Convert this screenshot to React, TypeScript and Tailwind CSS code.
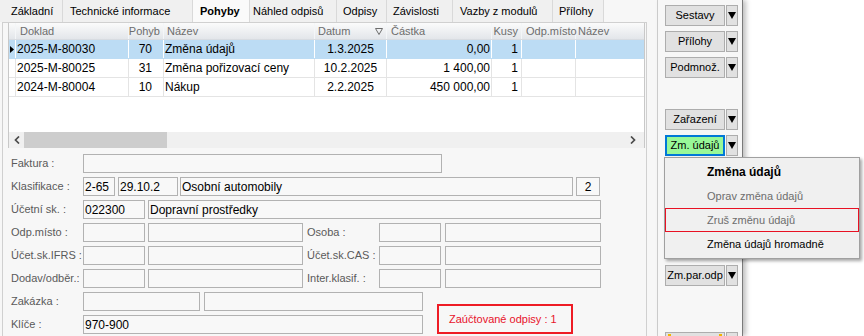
import React from "react";

const tabs = [
  { label: "Základní", w: "w-[63px]", pl: "pl-[11px]" },
  { label: "Technické informace", w: "w-[130px]", pl: "pl-[7px]" },
  { label: "Pohyby", w: "w-[57px]", pl: "pl-[7px]", active: true },
  { label: "Náhled odpisů", w: "w-[87px]", pl: "pl-[3px]" },
  { label: "Odpisy", w: "w-[50px]", pl: "pl-[6px]" },
  { label: "Závislosti", w: "w-[66px]", pl: "pl-[6px]" },
  { label: "Vazby z modulů", w: "w-[100px]", pl: "pl-[7px]" },
  { label: "Přílohy", w: "w-[51px]", pl: "pl-[6px]" },
];

const rows = [
  { doklad: "2025-M-80030", pohyb: "70", nazev: "Změna údajů", datum: "1.3.2025", castka: "0,00", kusy: "1", selected: true },
  { doklad: "2025-M-80025", pohyb: "31", nazev: "Změna pořizovací ceny", datum: "10.2.2025", castka: "1 400,00", kusy: "1" },
  { doklad: "2024-M-80004", pohyb: "10", nazev: "Nákup", datum: "2.2.2025", castka: "450 000,00", kusy: "1" },
];

function Tabs() {
  return (
    <div className="flex h-[22px] text-[11px]">
      {tabs.map((t) =>
        t.active ? (
          <div key={t.label} className={`${t.w} ${t.pl} flex items-center border-r border-[#d9d9d9] bg-[#fafafa] font-bold`}>
            {t.label}
          </div>
        ) : (
          <div key={t.label} className={`${t.w} ${t.pl} flex items-center border-r border-[#d9d9d9] bg-[#f0f0f0]`}>
            {t.label}
          </div>
        )
      )}
    </div>
  );
}

function Chevron({ right }: { right?: boolean }) {
  return (
    <svg width="6" height="8" viewBox="0 0 6 8">
      <path d={right ? "M1 0.5L4.5 4L1 7.5" : "M5 0.5L1.5 4L5 7.5"} stroke="#4a4a4a" strokeWidth="1.7" fill="none" />
    </svg>
  );
}

function Grid() {
  const head = "flex items-center border-r border-[#f4f6f8]";
  return (
    <div className="flex h-[125px] w-[637px] flex-col border-l border-r border-[#c8c8c8]">
      <div className="flex h-[17px] border-b border-[#d8dce1] bg-gradient-to-b from-[#fbfbfb] to-[#e3e6ea] text-[11px] text-[#6d6d6d]">
        <div className={`${head} w-[7px]`} />
        <div className={`${head} w-[113px] pl-[4px]`}>Doklad</div>
        <div className={`${head} w-[35px] justify-end pr-[3px]`}>Pohyb</div>
        <div className={`${head} w-[151px] pl-[3px]`}>Název</div>
        <div className={`${head} w-[72px] justify-between pl-[3px] pr-[3px]`}>
          <span>Datum</span>
          <svg width="8" height="7" viewBox="0 0 8 7">
            <path d="M0.5 0.5H7.5L4 6.5Z" stroke="#6d6d6d" fill="none" />
          </svg>
        </div>
        <div className={`${head} w-[105px] pl-[4px]`}>Částka</div>
        <div className={`${head} w-[30px] justify-end pr-[3px]`}>Kusy</div>
        <div className={`${head} w-[54px] pl-[4px]`}>Odp.místo</div>
        <div className="flex flex-1 items-center pl-[2px]">Název</div>
      </div>
      {rows.map((r) => {
        const line = r.selected ? "border-white" : "border-[#e4e4e4]";
        const cell = `flex items-center border-r ${line}`;
        return (
          <div
            key={r.doklad}
            className={`flex h-[19px] border-b text-[12px] ${r.selected ? "border-[#bcdcf4] bg-[#bcdcf4]" : "border-[#e4e4e4] bg-white"}`}
          >
            <div className={`${cell} w-[7px] justify-center`}>
              {r.selected && (
                <svg width="4" height="7" viewBox="0 0 4 7">
                  <path d="M0 0L4 3.5L0 7Z" fill="#000" />
                </svg>
              )}
            </div>
            <div className={`${cell} w-[113px] pl-[1px]`}>{r.doklad}</div>
            <div className={`${cell} w-[35px] justify-end pr-[11px]`}>{r.pohyb}</div>
            <div className={`${cell} w-[151px] pl-[1px]`}>{r.nazev}</div>
            <div className={`${cell} w-[72px] justify-center`}>{r.datum}</div>
            <div className={`${cell} w-[105px] justify-end pr-[1px]`}>{r.castka}</div>
            <div className={`${cell} w-[30px] justify-end pr-[3px]`}>{r.kusy}</div>
            <div className={`${cell} w-[54px]`} />
            <div className="flex-1" />
          </div>
        );
      })}
      <div className="flex-1 bg-white" />
      <div className="flex h-[16px] items-center bg-[#f0f0f0]">
        <div className="flex w-[15px] justify-center pl-[1px]">
          <Chevron />
        </div>
        <div className="h-full w-[143px] bg-[#cdcdcd]" />
        <div className="flex-1" />
        <div className="flex w-[14px] justify-start">
          <Chevron right />
        </div>
      </div>
    </div>
  );
}

function Box({ w, text, center, ml }: { w: string; text?: string; center?: boolean; ml?: string }) {
  return (
    <div
      className={`${w} ${ml ?? ""} flex h-full items-center border border-[#b2b2b2] bg-[#f8f8f8] text-[12px] ${center ? "justify-center" : "pl-[1px]"}`}
    >
      {text}
    </div>
  );
}

function Label({ text, w = "w-[72px]", ml }: { text: string; w?: string; ml?: string }) {
  return <div className={`${w} ${ml ?? ""} shrink-0 text-[11px] text-[#5a5a5a]`}>{text}</div>;
}

function Form() {
  return (
    <div className="flex flex-col gap-[4px] pl-[3px] pt-[6px]">
      <div className="flex h-[19px] items-center">
        <Label text="Faktura :" />
        <Box w="w-[359px]" />
      </div>
      <div className="flex h-[19px] items-center">
        <Label text="Klasifikace :" />
        <Box w="w-[32px]" text="2-65" />
        <Box w="w-[60px]" ml="ml-[3px]" text="29.10.2" />
        <Box w="w-[393px]" ml="ml-[2px]" text="Osobní automobily" />
        <Box w="w-[24px]" ml="ml-[3px]" text="2" center />
      </div>
      <div className="flex h-[19px] items-center">
        <Label text="Účetní sk. :" />
        <Box w="w-[62px]" text="022300" />
        <Box w="w-[453px]" ml="ml-[3px]" text="Dopravní prostředky" />
      </div>
      {[
        ["Odp.místo :", "Osoba :"],
        ["Účet.sk.IFRS :", "Účet.sk.CAS :"],
        ["Dodav/odběr.:", "Inter.klasif. :"],
      ].map(([a, b]) => (
        <div key={a} className="flex h-[19px] items-center">
          <Label text={a} />
          <Box w="w-[62px]" />
          <Box w="w-[155px]" ml="ml-[3px]" />
          <Label text={b} ml="ml-[4px]" />
          <Box w="w-[62px]" />
          <Box w="w-[156px]" ml="ml-[4px]" />
        </div>
      ))}
      <div className="flex items-end">
        <div className="flex flex-col gap-[4px]">
          <div className="flex h-[19px] items-center">
            <Label text="Zakázka :" />
            <Box w="w-[117px]" />
            <Box w="w-[219px]" ml="ml-[4px]" />
          </div>
          <div className="flex h-[19px] items-center">
            <Label text="Klíče :" />
            <Box w="w-[340px]" text="970-900" />
          </div>
        </div>
        <div className="ml-[14px] flex h-[30px] w-[136px] items-center border-2 border-[#ee1c25] pl-[10px] text-[11px] text-[#e8132b]">
          Zaúčtované odpisy : 1
        </div>
      </div>
    </div>
  );
}

function Arrow() {
  return (
    <svg width="8" height="7" viewBox="0 0 8 7">
      <path d="M0 0H8L4 7Z" fill="#000" />
    </svg>
  );
}

function PanelButton({ label, mt, green, marks }: { label: string; mt: string; green?: boolean; marks?: boolean }) {
  return (
    <div className={`${mt} flex h-[21px] shrink-0 gap-[1px] text-[11px]`}>
      <div
        className={`relative flex w-[60px] items-center justify-center ${
          green ? "border-2 border-[#0078d7] bg-[#98f898]" : "border border-[#adadad] bg-[#e1e1e1]"
        }`}
      >
        {label}
        {marks && (
          <>
            <span className="absolute left-[2px] top-[1px] h-[3px] w-[3px] bg-[#f2b600]" />
            <span className="absolute right-[2px] top-[1px] h-[3px] w-[3px] bg-[#f2b600]" />
          </>
        )}
      </div>
      <div className="flex w-[12px] items-center justify-center border border-[#adadad] bg-[#e1e1e1]">
        <Arrow />
      </div>
    </div>
  );
}

function Panel() {
  return (
    <div className="flex w-[85px] shrink-0 flex-col border-r border-[#7a7a7a] bg-[#f7f7f7] pl-[7px] pt-[5px] shadow-[3px_0_5px_rgba(0,0,0,0.25)]">
      <PanelButton label="Sestavy" mt="mt-0" />
      <PanelButton label="Přílohy" mt="mt-[5px]" />
      <PanelButton label="Podmnož." mt="mt-[5px]" />
      <PanelButton label="Zařazení" mt="mt-[31px]" />
      <PanelButton label="Zm. údajů" mt="mt-[5px]" green />
      <PanelButton label="Zm.par.odp" mt="mt-[109px]" />
      <PanelButton label="" mt="mt-[46px]" marks />
    </div>
  );
}

function Menu() {
  return (
    <div className="absolute left-[664px] top-[157px] flex h-[102px] w-[196px] flex-col border border-[#a0a0a0] bg-[#f0f0f0] py-[2px] shadow-[2px_2px_3px_rgba(0,0,0,0.35)]">
      <div className="flex h-[24px] items-center pl-[42px] text-[12px] font-bold">Změna údajů</div>
      <div className="flex h-[24px] items-center pl-[42px] text-[11px] text-[#6d6d6d]">Oprav změna údajů</div>
      <div className="flex h-[24px] items-center border border-[#e81123] pl-[41px] text-[11px] text-[#6d6d6d]">
        Zruš změnu údajů
      </div>
      <div className="flex h-[24px] items-center pl-[42px] text-[11px]">Změna údajů hromadně</div>
    </div>
  );
}

export default function App() {
  return (
    <div className="relative flex h-[336px] w-[864px] overflow-hidden bg-white font-['Liberation_Sans',Arial,sans-serif] text-black">
      <div className="flex w-[658px] shrink-0 flex-col border-r border-[#d0d0d0] bg-[#f7f7f7]">
        <Tabs />
        <div className="ml-[2px] flex w-[645px] flex-1 flex-col border-l border-r border-t border-[#d0d0d0] pl-[5px]">
          <Grid />
          <Form />
        </div>
      </div>
      <Panel />
      <div className="flex-1" />
      <Menu />
    </div>
  );
}
